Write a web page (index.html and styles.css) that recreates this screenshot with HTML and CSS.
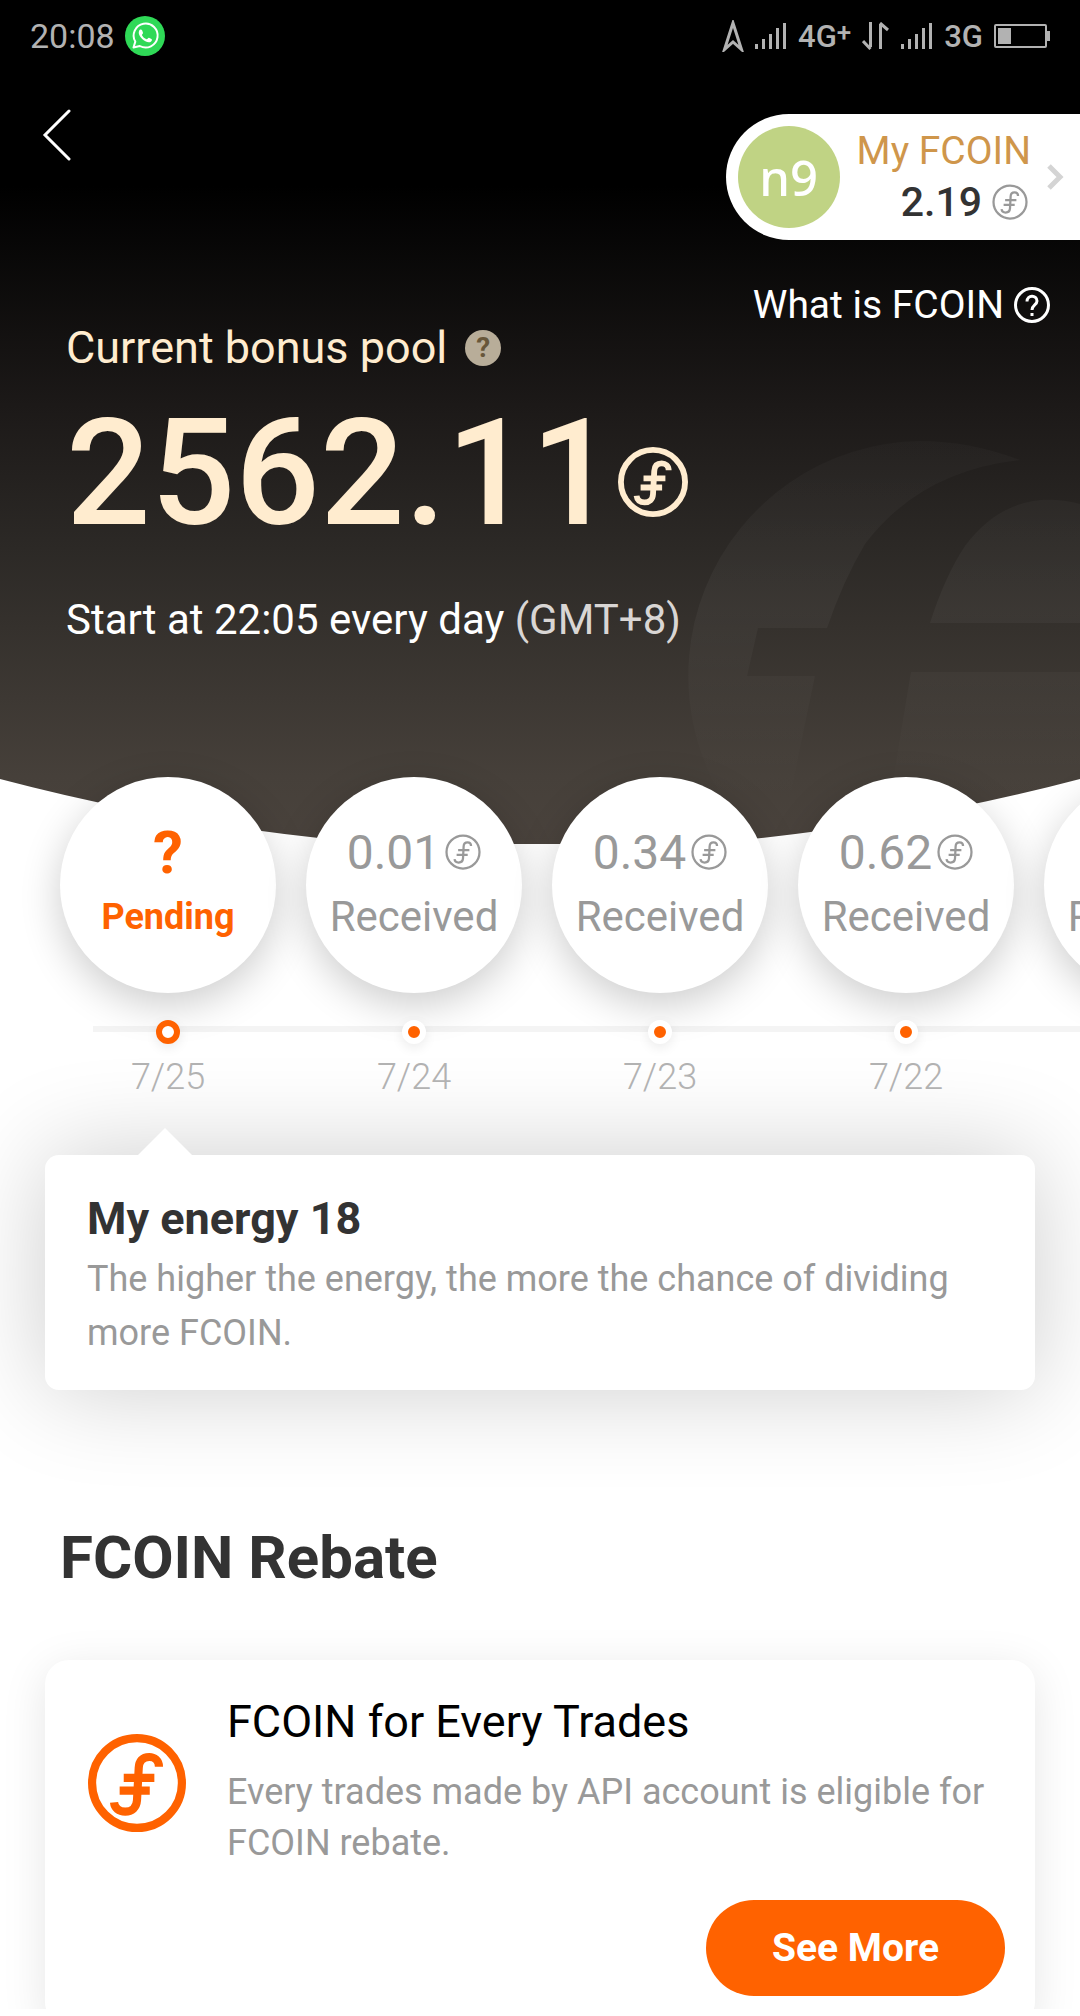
FILE: index.html
```
<!DOCTYPE html>
<html lang="en">
<head>
  <meta charset="UTF-8" />
  <meta name="viewport" content="width=device-width, initial-scale=1.0" />
  <title>FCOIN</title>
  <link rel="stylesheet" href="styles.css">
</head>
<body>
  <!-- shared icons -->
  <svg class="sprite" aria-hidden="true">
    <symbol id="coin" viewBox="0 0 96 96">
      <circle cx="48" cy="48" r="44" />
      <path d="M69.500 32C69.500 26 65 22.500 60 22.500C53 22.500 50 27 49.700 33L48 65C47.500 72 43 76 36.500 76C30 76 26 72.500 25.500 67M35 43H65M31 55.500H60.500" />
    </symbol>
    <symbol id="signal" viewBox="0 0 32 28">
      <path d="M1.500 22V27M8.500 17V27M15.500 12V27M22.500 6V27M29.500 1V27" />
    </symbol>
  </svg>

  <header class="hero">
    <svg class="hero-bg" viewBox="0 0 1080 844" preserveAspectRatio="none" aria-hidden="true">
      <defs>
        <linearGradient id="heroFill" gradientUnits="userSpaceOnUse" x1="0" y1="0" x2="0" y2="844">
          <stop offset="0.22" stop-color="#000" />
          <stop offset="0.48" stop-color="#1c1918" />
          <stop offset="0.65" stop-color="#2c2926" />
          <stop offset="0.92" stop-color="#46403a" />
          <stop offset="1" stop-color="#4a433d" />
        </linearGradient>
      </defs>
      <path fill="url(#heroFill)" d="M0 0H1080V779Q540 921 0 779Z" />
    </svg>
    <svg class="hero-mark" viewBox="0 0 395 403" aria-hidden="true">
      <defs>
        <linearGradient id="markFill" gradientUnits="userSpaceOnUse" x1="0" y1="0" x2="0" y2="403">
          <stop offset="0" stop-color="#fff" stop-opacity="0.02" />
          <stop offset="0.4" stop-color="#fff" stop-opacity="0.04" />
          <stop offset="0.9" stop-color="#fff" stop-opacity="0" />
        </linearGradient>
      </defs>
      <path fill="url(#markFill)" d="M74 403A235 235 0 0 1 235 0Q285 0 335 19Q235 30 180 103Q158 140 142 187H73L62 235H130Q112 320 96 403Z" />
      <path fill="url(#markFill)" d="M395 63Q325 45 280 105Q260 135 245 182H395ZM395 231H226Q216 290 198 403H395Z" />
    </svg>

    <div class="status-bar">
      <span class="time">20:08</span>
      <svg class="whatsapp" viewBox="0 0 40 40" aria-hidden="true">
        <circle cx="20" cy="20" r="20" fill="#2fd957" />
        <path d="M8.500 31.500L10.300 25.600A12 12 0 1 1 14.800 30Z" fill="none" stroke="#fff" stroke-width="2" stroke-linejoin="round" />
        <path d="M14 15c1-2 2.600-1.800 3.200-.4l.8 2.200c.2 1-1.200 1.700-1 2.400 1 2 2.400 3.200 4.600 4 .9.200 1.500-1.600 2.400-1.400l2.500 1.200c1 .6.300 2.400-1 3-2.500 1-6-.7-8.300-3-2.500-2.400-4.200-5.500-3.200-8Z" fill="#fff" />
      </svg>
      <div class="status-icons">
        <svg class="nav-arrow" viewBox="0 0 22 32" aria-hidden="true"><path d="M11 3L2.500 29.500L11 22L19.500 29.500Z" /></svg>
        <svg class="signal"><use href="#signal" /></svg>
        <span>4G<sup>+</sup></span>
        <svg class="data" viewBox="0 0 28 28" aria-hidden="true"><path d="M8.500 0V25M8.500 27L1 19M18.500 27V2M18 1L26 8" /></svg>
        <svg class="signal"><use href="#signal" /></svg>
        <span>3G</span>
        <svg class="battery" viewBox="0 0 56 24" aria-hidden="true">
          <rect x="1" y="1" width="51" height="22" rx="1" fill="none" stroke="#b2b2b2" stroke-width="2" />
          <path d="M4 4H17V20H4ZM53 7H56V17H53Z" fill="#b2b2b2" />
        </svg>
      </div>
    </div>

    <div class="top-row">
      <button class="back" aria-label="Back">
        <svg viewBox="0 0 30 52" aria-hidden="true"><path d="M27 2L3 26L27 50" /></svg>
      </button>
      <a class="account" href="#">
        <span class="avatar">n9</span>
        <span class="balance">
          <span class="balance-label">My FCOIN</span>
          <span class="balance-value">2.19 <svg class="coin"><use href="#coin" /></svg></span>
        </span>
        <svg class="chevron" viewBox="0 0 18 28" aria-hidden="true"><path d="M3 3L14 14L3 25" /></svg>
      </a>
    </div>

    <a class="what-is" href="#">What is FCOIN
      <svg viewBox="0 0 36 36" aria-hidden="true">
        <circle cx="18" cy="18" r="16.500" />
        <path d="M13 14.500C13 7.500 23 7.500 23 14C23 18 18 18 18 23M18 26V29" />
      </svg>
    </a>

    <div class="pool">
      <p class="pool-label">Current bonus pool <button class="help" aria-label="About the bonus pool">?</button></p>
      <p class="pool-value">2562.11 <svg class="coin"><use href="#coin" /></svg></p>
      <p class="pool-note">Start at 22:05 every day <span>(GMT+8)</span></p>
    </div>
  </header>

  <main>
    <ul class="history">
      <li class="day current">
        <div class="bubble"><span class="amount">?</span><span class="state">Pending</span></div>
        <i class="dot"></i>
        <span class="date">7/25</span>
      </li>
      <li class="day">
        <div class="bubble"><span class="amount">0.01<svg class="coin"><use href="#coin" /></svg></span><span class="state">Received</span></div>
        <i class="dot"></i>
        <span class="date">7/24</span>
      </li>
      <li class="day">
        <div class="bubble"><span class="amount">0.34<svg class="coin"><use href="#coin" /></svg></span><span class="state">Received</span></div>
        <i class="dot"></i>
        <span class="date">7/23</span>
      </li>
      <li class="day">
        <div class="bubble"><span class="amount">0.62<svg class="coin"><use href="#coin" /></svg></span><span class="state">Received</span></div>
        <i class="dot"></i>
        <span class="date">7/22</span>
      </li>
      <li class="day">
        <div class="bubble"><span class="amount"></span><span class="state">Received</span></div>
      </li>
    </ul>

    <section class="energy">
      <h2>My energy 18</h2>
      <p>The higher the energy, the more the chance of dividing more FCOIN.</p>
    </section>

    <h1>FCOIN Rebate</h1>

    <div class="rebate-list">
      <section class="rebate">
        <div class="rebate-body">
          <svg class="coin"><use href="#coin" /></svg>
          <div>
            <h3>FCOIN for Every Trades</h3>
            <p>Every trades made by API account is eligible for FCOIN rebate.</p>
          </div>
        </div>
        <button class="btn">See More</button>
      </section>
    </div>
  </main>
</body>
</html>
```
FILE: styles.css
```
:root {
  --orange: #ff6200;
  --cream: #ffeccf;
  --gray: #999;
  --dark: #333;
}

* {
  box-sizing: border-box;
  margin: 0;
  padding: 0;
  font-family: Roboto, 'Noto Sans', sans-serif;
}

body {
  background: #fff;
  overflow-x: hidden;
  padding-bottom: 7px;
}

a {
  text-decoration: none;
}

button {
  border: none;
  background: none;
  cursor: pointer;
}

.sprite {
  position: absolute;
  width: 0;
  height: 0;
}

.coin {
  width: 36px;
  height: 36px;
  fill: none;
  stroke: currentColor;
  stroke-width: 6px;
  flex: none;
}

/* hero */
.hero {
  position: relative;
  padding-bottom: 199px;
}

.hero-bg {
  position: absolute;
  top: 0;
  left: 0;
  width: 100%;
  height: 100%;
  z-index: -2;
}

.hero-mark {
  position: absolute;
  right: 0;
  bottom: 0;
  width: 395px;
  height: 403px;
  z-index: -1;
}

.status-bar {
  display: flex;
  align-items: center;
  gap: 10px;
  height: 72px;
  padding: 0 30px;
  color: #b2b2b2;
}

.time {
  font-size: 34px;
}

.whatsapp {
  width: 40px;
  height: 40px;
}

.status-icons {
  display: flex;
  align-items: center;
  gap: 11px;
  margin-left: auto;
  font-size: 31px;
  font-weight: 500;
}

.status-icons sup {
  font-size: 26px;
  line-height: 0;
  vertical-align: 6px;
}

.nav-arrow,
.signal,
.data {
  fill: none;
  stroke: #b2b2b2;
  stroke-width: 3px;
}

.nav-arrow {
  width: 22px;
  height: 32px;
}

.signal {
  width: 32px;
  height: 28px;
}

.data {
  width: 28px;
  height: 28px;
}

.battery {
  width: 56px;
  height: 24px;
}

.top-row {
  display: flex;
  justify-content: space-between;
  align-items: flex-start;
  margin-top: 42px;
}

.back {
  width: 30px;
  height: 42px;
  margin-left: 42px;
}

.back svg {
  width: 30px;
  height: 52px;
  margin-top: -5px;
  fill: none;
  stroke: #fff;
  stroke-width: 3px;
  stroke-linecap: round;
}

.account {
  display: flex;
  align-items: center;
  height: 126px;
  padding: 0 16px 0 12px;
  background: #fff;
  border-radius: 63px 0 0 63px;
}

.avatar {
  width: 102px;
  height: 102px;
  border-radius: 50%;
  background: #c0d384;
  color: #fff;
  font-family: 'Noto Sans', sans-serif;
  font-size: 49px;
  font-weight: 500;
  line-height: 102px;
  text-align: center;
}

.balance {
  display: flex;
  flex-direction: column;
  margin-left: 17px;
}

.balance-label {
  color: #cf964b;
  font-size: 39px;
  line-height: 50px;
}

.balance-value {
  display: flex;
  justify-content: flex-end;
  align-items: center;
  gap: 10px;
  padding-right: 3px;
  color: var(--dark);
  font-size: 41px;
  font-weight: 500;
  line-height: 52px;
}

.balance-value .coin {
  color: var(--gray);
}

.chevron {
  width: 18px;
  height: 28px;
  margin-left: 15px;
  fill: none;
  stroke: #d4d4d4;
  stroke-width: 5px;
}

.what-is {
  display: flex;
  justify-content: flex-end;
  align-items: center;
  gap: 10px;
  margin-top: 43px;
  padding-right: 30px;
  color: #fff;
  font-size: 39px;
  line-height: 44px;
}

.what-is svg {
  width: 36px;
  height: 36px;
  fill: none;
  stroke: #fff;
  stroke-width: 3px;
}

.pool {
  padding-left: 66px;
}

.pool-label {
  display: flex;
  align-items: center;
  gap: 18px;
  color: var(--cream);
  font-size: 45px;
  line-height: 42px;
}

.help {
  width: 36px;
  height: 36px;
  border-radius: 50%;
  background: #b8ad99;
  color: #68573a;
  font-size: 28px;
  font-weight: 700;
  line-height: 36px;
}

.pool-value {
  display: flex;
  align-items: center;
  gap: 2px;
  margin-top: 30px;
  color: var(--cream);
  font-size: 149px;
  font-weight: 500;
  line-height: 148px;
}

.pool-value .coin {
  width: 70px;
  height: 70px;
  margin-top: 18px;
  stroke-width: 8px;
}

.pool-note {
  margin-top: 48px;
  color: #fff;
  font-size: 42px;
  line-height: 50px;
}

.pool-note span {
  color: #d9d6d4;
}

/* history */
.history {
  position: relative;
  display: flex;
  gap: 30px;
  margin-top: -67px;
  padding-left: 60px;
  list-style: none;
  overflow-x: clip;
}

.history::before {
  content: '';
  position: absolute;
  top: 249px;
  left: 93px;
  right: 0;
  height: 6px;
  background: #f4f4f4;
}

.day {
  position: relative;
  flex: none;
  width: 216px;
  display: flex;
  flex-direction: column;
  align-items: center;
}

.bubble {
  display: flex;
  flex-direction: column;
  align-items: center;
  width: 216px;
  height: 216px;
  padding-top: 45px;
  border-radius: 50%;
  background: #fff;
  color: var(--gray);
  box-shadow: 0 12px 40px rgba(0, 0, 0, 0.2);
}

.amount {
  display: flex;
  align-items: center;
  gap: 5px;
  height: 60px;
  font-size: 48px;
}

.state {
  font-size: 42px;
  line-height: 70px;
}

.current .bubble {
  color: var(--orange);
  font-weight: 700;
}

.current .amount {
  font-size: 60px;
}

.current .state {
  font-size: 36px;
}

.dot {
  width: 24px;
  height: 24px;
  margin-top: 27px;
  border: 6px solid #fff;
  border-radius: 50%;
  background: var(--orange);
  box-shadow: 0 4px 12px rgba(0, 0, 0, 0.08);
}

.current .dot {
  border-color: var(--orange);
  background: #fff;
}

.date {
  margin-top: 11px;
  color: #b2b2b2;
  font-size: 36px;
  font-weight: 300;
  line-height: 44px;
}

/* cards */
.energy {
  position: relative;
  z-index: -3;
  margin: 56px 45px 0;
  padding: 37px 42px 30px;
  border-radius: 14px;
  background: #fff;
  box-shadow: 0 0 100px rgba(0, 0, 0, 0.2);
}

.energy::before {
  content: '';
  position: absolute;
  top: -27px;
  left: 93px;
  border: 27px solid transparent;
  border-top: none;
  border-bottom-color: #fff;
}

.energy h2 {
  margin-bottom: 6px;
  color: var(--dark);
  font-size: 45px;
  line-height: 54px;
}

.energy p {
  color: var(--gray);
  font-size: 36px;
  line-height: 54px;
}

h1 {
  margin: 133px 60px 0;
  color: var(--dark);
  font-size: 60px;
  line-height: 70px;
}

.rebate-list {
  padding: 67px 45px 0;
  overflow: hidden;
}

.rebate {
  margin-bottom: -17px;
  padding: 36px 30px 30px 43px;
  border-radius: 24px;
  background: #fff;
  box-shadow: 0 9px 45px rgba(0, 0, 0, 0.1);
  display: flex;
  flex-direction: column;
}

.rebate-body {
  display: flex;
  align-items: center;
  gap: 41px;
}

.rebate-body .coin {
  width: 98px;
  height: 98px;
  color: var(--orange);
  stroke-width: 8px;
}

.rebate h3 {
  color: #000;
  font-size: 45px;
  font-weight: 400;
  line-height: 52px;
}

.rebate p {
  margin-top: 19px;
  color: var(--gray);
  font-size: 36px;
  line-height: 51px;
}

.btn {
  align-self: flex-end;
  margin-top: 31px;
  padding: 0 66px;
  border-radius: 48px;
  background: var(--orange);
  color: #fff;
  font-size: 39px;
  font-weight: 700;
  line-height: 96px;
}
```
